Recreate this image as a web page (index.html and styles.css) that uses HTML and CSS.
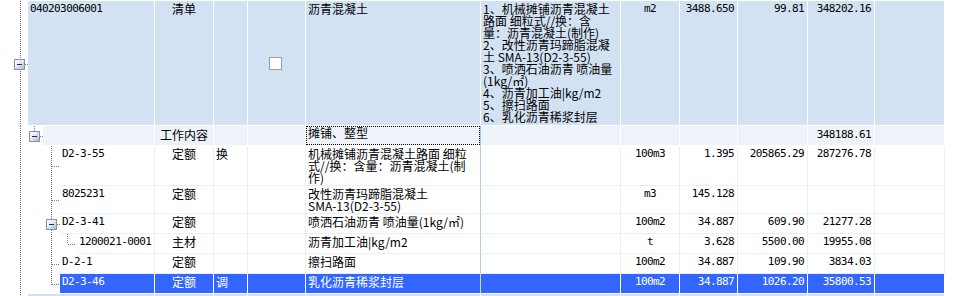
FILE: index.html
```html
<!DOCTYPE html>
<html lang="zh-CN">
<head>
<meta charset="utf-8">
<title>清单</title>
<link rel="stylesheet" href="styles.css">
</head>
<body>
<div class="sheet">
  <div class="row lead h-lead">
    <div class="gut root"><span class="box"></span><span class="hc w3"></span></div>
    <div class="c0"><div class="code">040203006001</div></div>
    <div class="c mid">清单</div>
    <div class="c"></div>
    <div class="c chk"><span class="checkbox"></span></div>
    <div class="c name">沥青混凝土</div>
    <div class="c desc">1、机械摊铺沥青混凝土<br>路面 细粒式//换：含<br>量：沥青混凝土(制作)<br>2、改性沥青玛蹄脂混凝<br>土 SMA-13(D2-3-55)<br>3、喷洒石油沥青 喷油量<br>(1kg/㎡)<br>4、沥青加工油|kg/m2<br>5、擦扫路面<br>6、乳化沥青稀浆封层</div>
    <div class="c mid unit">m2</div>
    <div class="c num">3488.650</div>
    <div class="c num">99.81</div>
    <div class="c num">348202.16</div>
    <div class="c"></div>
  </div>

  <div class="row group h20">
    <div class="gut"></div>
    <div class="c0"><div class="tree t1"><span class="box"></span><span class="hc w3"></span></div><div class="code"></div></div>
    <div class="c mid pt3">工作内容</div>
    <div class="c"></div>
    <div class="c"></div>
    <div class="c name focus"><div class="fr">摊铺、整型</div></div>
    <div class="c"></div>
    <div class="c"></div>
    <div class="c"></div>
    <div class="c"></div>
    <div class="c num pt3">348188.61</div>
    <div class="c"></div>
  </div>

  <div class="row plain h40">
    <div class="gut"></div>
    <div class="c0"><div class="tree t2 tee"><span class="hc w8 s24"></span></div><div class="code">D2-3-55</div></div>
    <div class="c mid">定额</div>
    <div class="c">换</div>
    <div class="c"></div>
    <div class="c name">机械摊铺沥青混凝土路面 细粒<br>式//换：含量：沥青混凝土(制<br>作)</div>
    <div class="c"></div>
    <div class="c mid unit">100m3</div>
    <div class="c num">1.395</div>
    <div class="c num">205865.29</div>
    <div class="c num">287276.78</div>
    <div class="c"></div>
  </div>

  <div class="row plain h28">
    <div class="gut"></div>
    <div class="c0"><div class="tree t2 tee"><span class="hc w8 s24"></span></div><div class="code">8025231</div></div>
    <div class="c mid">定额</div>
    <div class="c"></div>
    <div class="c"></div>
    <div class="c name">改性沥青玛蹄脂混凝土<br>SMA-13(D2-3-55)</div>
    <div class="c"></div>
    <div class="c mid unit">m3</div>
    <div class="c num">145.128</div>
    <div class="c num"></div>
    <div class="c num"></div>
    <div class="c"></div>
  </div>

  <div class="row plain h20">
    <div class="gut"></div>
    <div class="c0"><div class="tree t2 tee"><span class="box s18"></span><span class="hc w3"></span></div><div class="code">D2-3-41</div></div>
    <div class="c mid">定额</div>
    <div class="c"></div>
    <div class="c"></div>
    <div class="c name">喷洒石油沥青 喷油量(1kg/㎡)</div>
    <div class="c"></div>
    <div class="c mid unit">100m2</div>
    <div class="c num">34.887</div>
    <div class="c num">609.90</div>
    <div class="c num">21277.28</div>
    <div class="c"></div>
  </div>

  <div class="row plain h20">
    <div class="gut"></div>
    <div class="c0"><div class="tree t3"><span class="hc w8 s40"></span></div><div class="code">1200021-0001</div></div>
    <div class="c mid">主材</div>
    <div class="c"></div>
    <div class="c"></div>
    <div class="c name">沥青加工油|kg/m2</div>
    <div class="c"></div>
    <div class="c mid unit">t</div>
    <div class="c num">3.628</div>
    <div class="c num">5500.00</div>
    <div class="c num">19955.08</div>
    <div class="c"></div>
  </div>

  <div class="row plain h20">
    <div class="gut"></div>
    <div class="c0"><div class="tree t2 tee"><span class="hc w8 s24"></span></div><div class="code">D-2-1</div></div>
    <div class="c mid">定额</div>
    <div class="c"></div>
    <div class="c"></div>
    <div class="c name">擦扫路面</div>
    <div class="c"></div>
    <div class="c mid unit">100m2</div>
    <div class="c num">34.887</div>
    <div class="c num">109.90</div>
    <div class="c num">3834.03</div>
    <div class="c"></div>
  </div>

  <div class="row sel h20">
    <div class="gut"></div>
    <div class="c0"><div class="tree t2 end"><span class="hc w8 s24"></span></div><div class="code">D2-3-46</div></div>
    <div class="c mid">定额</div>
    <div class="c">调</div>
    <div class="c"></div>
    <div class="c name">乳化沥青稀浆封层</div>
    <div class="c"></div>
    <div class="c mid unit">100m2</div>
    <div class="c num">34.887</div>
    <div class="c num">1026.20</div>
    <div class="c num">35800.53</div>
    <div class="c"></div>
  </div>

  <div class="row lead h-tail">
    <div class="gut"></div>
    <div class="c0"><div class="code">040203004001</div></div>
    <div class="c mid">清单</div>
    <div class="c"></div>
    <div class="c"></div>
    <div class="c name">透层、粘层、封层沥青</div>
    <div class="c desc">1、喷洒石油沥青 喷油量</div>
    <div class="c mid unit">m2</div>
    <div class="c num">3488.650</div>
    <div class="c num">6.27</div>
    <div class="c num">21873.84</div>
    <div class="c"></div>
  </div>
</div>
</body>
</html>
```

FILE: styles.css
```css
* {
  box-sizing: border-box;
  margin: 0;
  padding: 0;
}

html,
body {
  background: #ffffff;
}

body {
  width: 956px;
  height: 296px;
  overflow: hidden;
  font-family: "Noto Sans CJK SC", "Noto Sans", sans-serif;
  font-size: 12px;
  line-height: 12px;
  color: #000000;
  --vdot: repeating-linear-gradient(to bottom, #7c7c7c 0 1px, transparent 1px 2px);
  --hdot: repeating-linear-gradient(to right, #7c7c7c 0 1px, transparent 1px 2px);
}

.sheet {
  padding-top: 1px;
}

.row {
  display: grid;
  grid-template-columns: 28px 127px 59px 34px 58px 175px 140px 59px 58px 70px 67px 70px;
}

.h-lead { height: 125px; }
.h20 { height: 20px; }
.h28 { height: 28px; }
.h40 { height: 40px; }
.h-tail { height: 30px; }

.lead { --bg: #d3e2f3; --bd: #ffffff; --bd-name: #ffffff; }
.group { --bg: #eef3fa; --bd: #ffffff; --bd-name: #a9c3e8; }
.plain { --bg: #ffffff; --bd: #eaeff6; --bd-name: #b1c9ea; }
.sel { --bg: #3366ff; --bd: #ffffff; --bd-name: #c9d8ff; color: #ffffff; }

.c {
  background: var(--bg);
  border-right: 1px solid var(--bd);
  border-bottom: 1px solid var(--bd);
  padding: 2px 2px 0 2px;
  white-space: nowrap;
  overflow: hidden;
}

.c.name {
  border-right-color: var(--bd-name);
}

.pt3 {
  padding-top: 3px;
}

.mid {
  text-align: center;
}

.num {
  text-align: right;
  padding-right: 3px;
}

/* latin-only cells: narrow monospace like the original grid */
.code,
.num,
.unit {
  font-family: "DejaVu Sans Mono", "Liberation Mono", monospace;
  font-size: 11px;
  line-height: 12px;
  letter-spacing: -0.6px;
}

.c0 {
  display: flex;
  min-width: 0;
}

.code {
  flex: 1;
  min-width: 0;
  background: var(--bg);
  border-right: 1px solid var(--bd);
  border-bottom: 1px solid var(--bd);
  padding: 2px 2px 0 2px;
  white-space: nowrap;
  overflow: hidden;
}

/* checkbox column */
.chk {
  display: flex;
  align-items: center;
  justify-content: center;
  padding: 0 2px 0 0;
}

.checkbox {
  width: 13px;
  height: 13px;
  border: 1px solid #9c9c9c;
  background: #ffffff;
}

/* focused cell */
.focus {
  padding: 0;
}

.focus .fr {
  height: 100%;
  border: 1px dotted #000000;
  padding: 0 0 0 1px;
}

/* tree gutter and connectors */
.gut {
  display: flex;
  align-items: center;
  background-color: #ffffff;
  background-image: var(--vdot);
  background-size: 1px 100%;
  background-position: 20px 0;
  background-repeat: no-repeat;
}

.gut.root {
  padding-top: 2px;
}

.gut.root .box {
  margin-left: 14px;
}

.tree {
  flex: none;
  display: flex;
  align-items: center;
  background-color: #ffffff;
  background-repeat: no-repeat;
}

.t1 {
  width: 15px;
  background-image: var(--vdot);
  background-size: 1px 50%;
  background-position: 6px 0;
}

.t1 .box {
  margin-left: 1px;
}

.t2 {
  width: 32px;
  background-image: var(--vdot);
  background-size: 1px 100%;
  background-position: 23px 0;
}

.t2.end {
  background-size: 1px calc(50% + 1px);
}

.t3 {
  width: 49px;
  background-image: var(--vdot), var(--vdot);
  background-size: 1px 100%, 1px 50%;
  background-position: 23px 0, 39px 0;
}

.hc {
  flex: none;
  height: 1px;
  background: var(--hdot);
}

.w3 { width: 3px; }
.w8 { width: 8px; }
.s18 { margin-left: 18px; }
.s24 { margin-left: 24px; }
.s40 { margin-left: 40px; }

.box {
  flex: none;
  width: 11px;
  height: 11px;
  border: 1px solid #8193ad;
  background: linear-gradient(135deg, #ffffff 0%, #e4eaf3 45%, #aab9d2 100%);
  display: flex;
  align-items: center;
  justify-content: center;
}

.box::before {
  content: "";
  width: 5px;
  height: 1px;
  background: #1c2a55;
}
```
